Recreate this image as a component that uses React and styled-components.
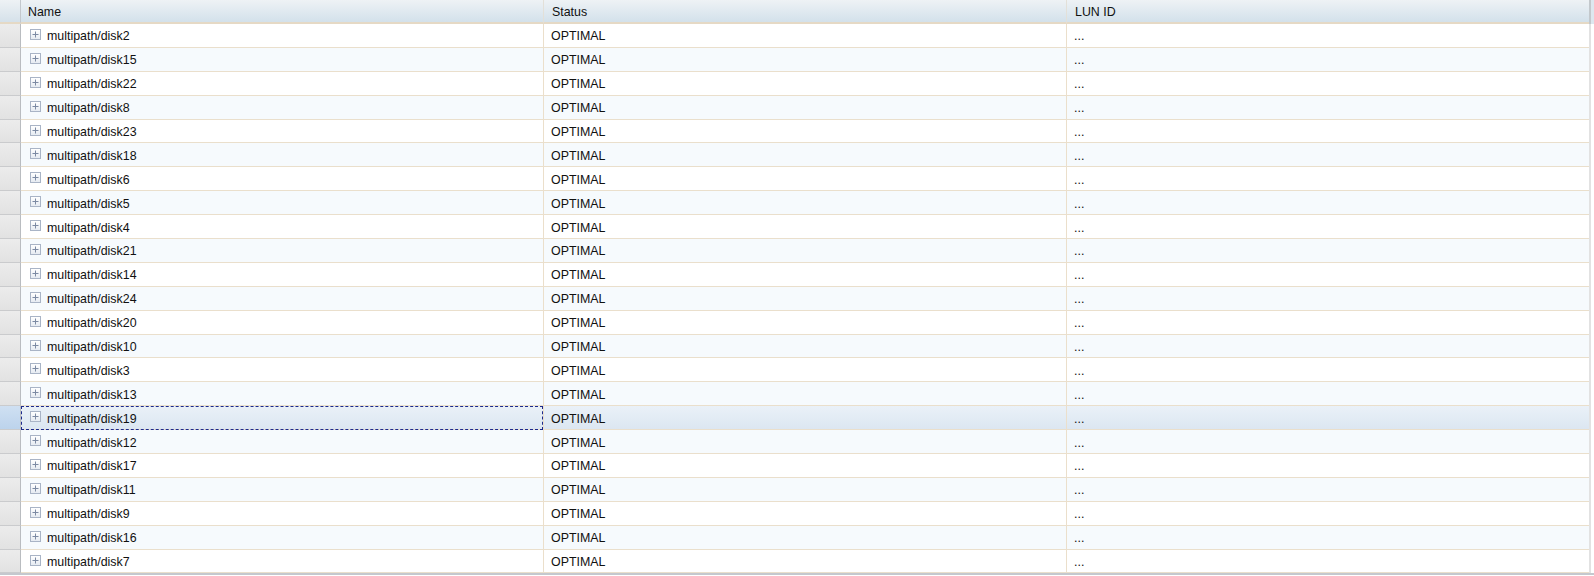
import React from 'react';
import styled, { createGlobalStyle } from 'styled-components';

const GlobalStyle = createGlobalStyle`
    html, body {
        margin: 0;
        padding: 0;
        background: #ffffff;
    }
    body {
        font-family: "Lucida Grande", "Liberation Sans", Arial, sans-serif;
        font-size: 12px;
        color: #111111;
    }
`

const disks = [2, 15, 22, 8, 23, 18, 6, 5, 4, 21, 14, 24, 20, 10, 3, 13, 19, 12, 17, 11, 9, 16, 7];
const SELECTED = 19;

const COLS = '21px 522px 523px 523px 1fr';

const Grid = styled.div`
    width: 1594px;
    height: 576px;
    overflow: hidden;
    display: flex;
    flex-direction: column;
    background: #ffffff;
`

const Header = styled.div`
    display: grid;
    grid-template-columns: ${COLS};
    height: 24px;
    flex: none;
`

const HeaderCell = styled.div`
    display: flex;
    align-items: center;
    padding-left: ${({first}) => first ? 7 : 8}px;
    padding-top: 2px;
    background: linear-gradient(to bottom, #eef2f5 0%, #d3e1eb 100%);
    border-bottom: 2px solid #e5d9c5;
    border-left: ${({first}) => first ? 'none' : '1px solid #e3e0d8'};
    font-size: 12.4px;
    color: #111;
    box-sizing: border-box;
`

const HeaderGutter = styled.div`
    background: linear-gradient(to bottom, #eef2f5 0%, #d5e1ea 100%);
    border-right: 1px solid #c3c8cd;
    border-bottom: 2px solid #e5d9c5;
`

const HeaderEnd = styled.div`
    background: #dde7ef;
    border-left: 2px solid #c3c8cc;
`

const Body = styled.div`
    display: flex;
    flex-direction: column;
    border-bottom: 2px solid #c4c8ce;
`

const Row = styled.div`
    display: grid;
    grid-template-columns: ${COLS};
    height: 23.9px;
    box-sizing: border-box;
    background: ${({selected, odd}) => selected
        ? 'linear-gradient(to bottom, #eaf1f8 0%, #dbe6f1 100%)'
        : odd ? '#f6fafd' : '#ffffff'};
`

const Gutter = styled.div`
    background: ${({selected}) => selected
        ? 'linear-gradient(to bottom, #cfe0f2 0%, #bcd3ec 100%)'
        : 'linear-gradient(to bottom, #ececec 0%, #e2e2e2 100%)'};
    border-right: 1px solid #b9bcc0;
    border-bottom: 1px solid #cacbcd;
`

const Cell = styled.div`
    display: flex;
    align-items: center;
    padding-left: ${({pad}) => pad || 7}px;
    padding-top: 2px;
    border-left: ${({first}) => first ? 'none' : '1px solid #ebdfcb'};
    border-bottom: 1px solid #eadfcc;
    white-space: nowrap;
    overflow: hidden;
    font-size: 12.4px;
    color: #111;
    box-sizing: border-box;
    ${({focused}) => focused && `
        outline: 1px dashed #1c2a8c;
        outline-offset: -1px;
    `}
`

const RowEnd = styled.div`
    background: #ffffff;
    border-left: 2px solid #e2e2e2;
`

const Expander = styled.span`
    display: inline-flex;
    align-items: center;
    justify-content: center;
    width: 9px;
    height: 9px;
    border: 1px solid #a9b4c6;
    background: linear-gradient(to bottom, #ffffff 0%, #e6ebf2 100%);
    margin-right: 6px;
    margin-top: -4px;
    flex: none;
`

const PlusIcon = () => (
    <svg width="7" height="7" viewBox="0 0 7 7">
        <path d="M3.5 0.5 V6.5 M0.5 3.5 H6.5" stroke="#7c8aa3" strokeWidth="1" />
    </svg>
)

const App = () => {
    return (
        <Grid>
            <GlobalStyle />
            <Header>
                <HeaderGutter />
                <HeaderCell first>Name</HeaderCell>
                <HeaderCell>Status</HeaderCell>
                <HeaderCell>LUN ID</HeaderCell>
                <HeaderEnd />
            </Header>
            <Body>
                {disks.map((d, i) => {
                    const selected = d === SELECTED;
                    return (
                        <Row key={d} odd={i % 2 === 1} selected={selected}>
                            <Gutter selected={selected} />
                            <Cell first pad={9} focused={selected}>
                                <Expander><PlusIcon /></Expander>
                                multipath/disk{d}
                            </Cell>
                            <Cell>OPTIMAL</Cell>
                            <Cell>...</Cell>
                            <RowEnd />
                        </Row>
                    )
                })}
            </Body>
        </Grid>
    )
}

export default App;
